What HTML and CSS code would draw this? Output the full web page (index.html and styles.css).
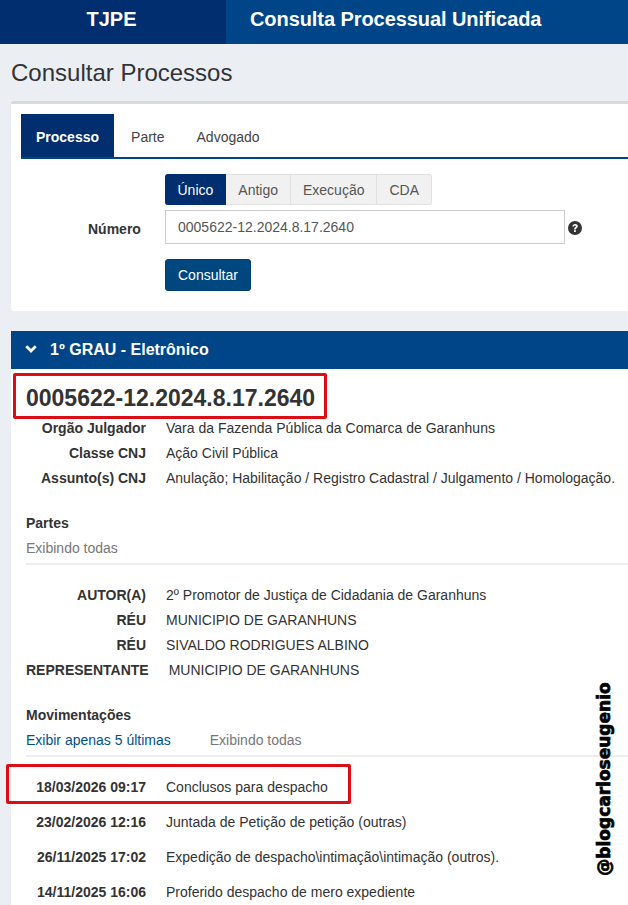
FILE: index.html
```html
<!DOCTYPE html>
<html lang="pt-BR">
<head>
<meta charset="UTF-8">
<meta name="viewport" content="width=device-width, initial-scale=1.0">
<title>Consulta Processual Unificada</title>
<link rel="stylesheet" href="styles.css">
</head>
<body>

<header class="topbar">
  <div class="brand">TJPE</div>
  <div class="app-title">Consulta Processual Unificada</div>
</header>

<main class="page">
  <h1 class="page-title">Consultar Processos</h1>

  <section class="search-card">
    <nav class="tabs">
      <a class="tab active">Processo</a>
      <a class="tab">Parte</a>
      <a class="tab">Advogado</a>
    </nav>

    <div class="form-row type-row">
      <div class="btn-group">
        <span class="seg active">Único</span>
        <span class="seg">Antigo</span>
        <span class="seg">Execução</span>
        <span class="seg">CDA</span>
      </div>
    </div>

    <div class="form-row number-row">
      <label class="form-label">Número</label>
      <div class="fake-input">0005622-12.2024.8.17.2640</div>
      <svg class="help-icon" viewBox="0 0 14 14" width="14" height="14">
        <circle cx="7" cy="7" r="7" fill="#333"/>
        <path d="M4.4 5.5C4.5 3.9 5.6 2.9 7.1 2.9c1.5 0 2.7.9 2.7 2.3 0 1.8-2 1.8-2 3.2H6c0-2.2 1.9-2 1.9-3.2 0-.5-.4-.8-.9-.8-.6 0-1 .4-1 1.1z" fill="#fff"/>
        <rect x="6" y="9.2" width="1.8" height="1.8" fill="#fff"/>
      </svg>
    </div>

    <div class="form-row submit-row">
      <button class="btn-primary">Consultar</button>
    </div>
  </section>

  <section class="result">
    <div class="result-bar">
      <svg class="chevron" viewBox="0 0 12 8" width="12" height="8">
        <path d="M1.3 1.3L6 6l4.7-4.7" fill="none" stroke="#fff" stroke-width="2.8"/>
      </svg>
      <span>1º GRAU - Eletrônico</span>
    </div>

    <div class="result-body">
      <h2 class="process-number">0005622-12.2024.8.17.2640</h2>

      <div class="info-row"><span class="info-label">Orgão Julgador</span><span>Vara da Fazenda Pública da Comarca de Garanhuns</span></div>
      <div class="info-row"><span class="info-label">Classe CNJ</span><span>Ação Civil Pública</span></div>
      <div class="info-row"><span class="info-label">Assunto(s) CNJ</span><span>Anulação; Habilitação / Registro Cadastral / Julgamento / Homologação.</span></div>

      <h3 class="block-title parts-title">Partes</h3>
      <div class="filter-line"><span class="muted">Exibindo todas</span></div>

      <div class="parts">
        <div class="info-row"><span class="info-label">AUTOR(A)</span><span>2º Promotor de Justiça de Cidadania de Garanhuns</span></div>
        <div class="info-row"><span class="info-label">RÉU</span><span>MUNICIPIO DE GARANHUNS</span></div>
        <div class="info-row"><span class="info-label">RÉU</span><span>SIVALDO RODRIGUES ALBINO</span></div>
        <div class="info-row"><span class="info-label">REPRESENTANTE</span><span>MUNICIPIO DE GARANHUNS</span></div>
      </div>

      <h3 class="block-title moves-title">Movimentações</h3>
      <div class="filter-line"><a class="link">Exibir apenas 5 últimas</a><span class="muted">Exibindo todas</span></div>

      <div class="moves">
        <div class="info-row move"><span class="info-label">18/03/2026 09:17</span><span>Conclusos para despacho</span></div>
        <div class="info-row move"><span class="info-label">23/02/2026 12:16</span><span>Juntada de Petição de petição (outras)</span></div>
        <div class="info-row move"><span class="info-label">26/11/2025 17:02</span><span>Expedição de despacho\intimação\intimação (outros).</span></div>
        <div class="info-row move"><span class="info-label">14/11/2025 16:06</span><span>Proferido despacho de mero expediente</span></div>
      </div>
    </div>
  </section>
</main>

<!-- marcas por cima do print -->
<div class="mark mark-number"></div>
<div class="mark mark-move"></div>
<div class="watermark">@blogcarloseugenio</div>

</body>
</html>
```

FILE: styles.css
```css
html, body {
  height: 905px;
  overflow: hidden;
}
body {
  position: relative;
  margin: 0;
  background-color: #ebeef3;
  color: #333;
  font-family: "Liberation Sans", Arial, sans-serif;
  font-size: 14px;
  line-height: 20px;
}
.topbar {
  display: flex;
  height: 44px;
  background-color: #004587;
  color: #fff;
  font-size: 20px;
  font-weight: bold;
  line-height: 39px;
}
.brand {
  width: 226px;
  padding-right: 3px;
  box-sizing: border-box;
  text-align: center;
  background-color: #002e6e;
}
.app-title {
  padding-left: 24px;
  letter-spacing: -0.07px;
}
.page {
  box-sizing: border-box;
  width: 628px;
  padding-left: 11px;
}
.page-title {
  margin: 0;
  padding-top: 15px;
  height: 42px;
  font-size: 24px;
  font-weight: normal;
  line-height: 28px;
}
.search-card {
  box-sizing: border-box;
  height: 210px;
  padding: 10px 0 10px 10px;
  background-color: #fff;
  border-top: 3px solid #d6d9de;
  border-radius: 3px 0 0 3px;
}
.tabs {
  display: flex;
  height: 43px;
  border-bottom: 2px solid #00467f;
}
.tab {
  padding: 0 15px;
  line-height: 46px;
  margin-right: 2px;
  color: #444;
}
.tab.active {
  color: #fff;
  font-weight: bold;
  background-color: #002e6e;
}
.form-row {
  display: flex;
  align-items: center;
  padding-left: 144px;
  position: relative;
}
.type-row {
  margin-top: 15px;
}
.btn-group {
  display: flex;
  height: 31px;
  line-height: 30px;
}
.seg {
  padding: 0 11.5px 0 12.5px;
  color: #555;
  background-color: #f1f1f1;
  border: 1px solid #e0e0e0;
  border-left-width: 0;
}
.seg:last-child {
  border-radius: 0 3px 3px 0;
}
.seg.active {
  color: #fff;
  background-color: #002e6e;
  border-color: #002e6e;
  border-radius: 3px 0 0 3px;
}
.number-row {
  margin-top: 5px;
}
.form-label {
  position: absolute;
  left: 67px;
  top: 9px;
  font-weight: bold;
}
.fake-input {
  box-sizing: border-box;
  width: 400px;
  height: 34px;
  padding: 0 12px;
  line-height: 32px;
  color: #555;
  border: 1px solid #ccc;
}
.help-icon {
  margin: 2px 0 0 3px;
}
.submit-row {
  margin-top: 15px;
}
.btn-primary {
  height: 32px;
  padding: 0 12px;
  color: #fff;
  font: inherit;
  background-color: #00467f;
  border: 1px solid #003d70;
  border-radius: 3px;
}
.result {
  margin-top: 20px;
  background-color: #fff;
}
.result-bar {
  display: flex;
  align-items: center;
  height: 38px;
  padding-left: 14px;
  color: #fff;
  font-size: 16px;
  font-weight: bold;
  background-color: #004587;
}
.chevron {
  margin: -3px 13px 0 0;
}
.result-body {
  box-sizing: border-box;
  height: 536px;
  padding: 0 0 0 15px;
  overflow: hidden;
}
.process-number {
  margin: 0;
  padding-top: 15px;
  height: 32px;
  font-size: 23px;
  line-height: 28px;
  font-weight: bold;
}
.info-row {
  display: flex;
  height: 25px;
  line-height: 25px;
  white-space: nowrap;
}
.info-label {
  min-width: 120px;
  margin-right: 20px;
  text-align: right;
  font-weight: bold;
}
.block-title {
  margin: 0;
  font-size: 14px;
  line-height: 25px;
  font-weight: bold;
}
.parts-title {
  margin-top: 20px;
}
.moves-title {
  margin-top: 20px;
}
.filter-line {
  display: flex;
  gap: 39px;
  height: 25px;
  line-height: 25px;
  padding-bottom: 2px;
  border-bottom: 2px solid #eee;
}
.parts {
  padding-top: 18px;
}
.moves {
  padding-top: 13px;
}
.move {
  height: 35px;
  line-height: 35px;
}
.muted {
  color: #777;
}
.link {
  color: #00508c;
}
.mark {
  position: absolute;
  box-sizing: border-box;
  border: 3px solid #dc0d15;
  border-radius: 2px;
}
.mark-number {
  left: 13px;
  top: 373px;
  width: 314px;
  height: 46px;
}
.mark-move {
  left: 6px;
  top: 764px;
  width: 345px;
  height: 40px;
}
.watermark {
  position: absolute;
  left: 604px;
  top: 779px;
  color: #000;
  font-family: "DejaVu Sans", sans-serif;
  font-size: 17px;
  font-weight: bold;
  line-height: 20px;
  white-space: nowrap;
  -webkit-text-stroke: 0.7px #000;
  transform: translate(-50%, -50%) rotate(-90deg);
}
```
